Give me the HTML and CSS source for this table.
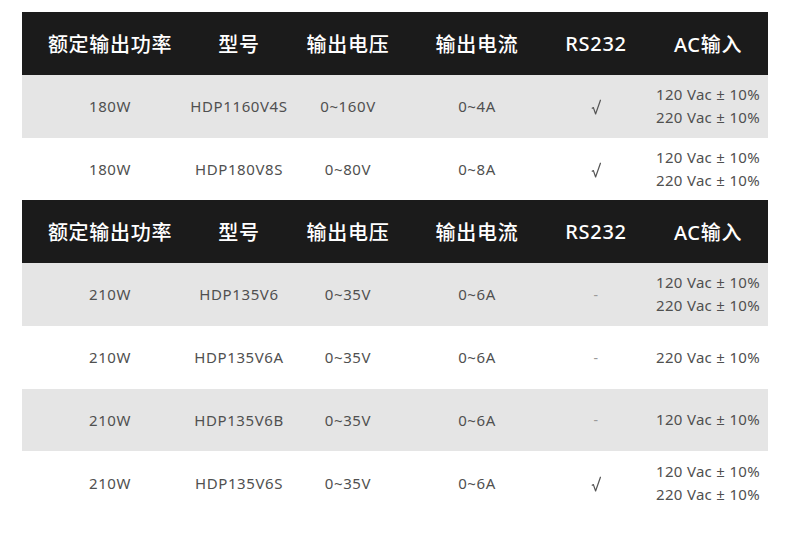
FILE: index.html
```html
<!DOCTYPE html>
<html lang="zh">
<head>
<meta charset="utf-8">
<link rel="stylesheet" href="styles.css">
</head>
<body>
<div class="table">
  <div class="row head">
    <div>额定输出功率</div><div>型号</div><div>输出电压</div><div>输出电流</div><div class="latin">RS232</div><div class="latin">AC输入</div>
  </div>
  <div class="row gray">
    <div>180W</div><div>HDP1160V4S</div><div>0~160V</div><div>0~4A</div><div class="mark"><svg width="10" height="16" viewBox="0 0 10 16"><path d="M0.8 9.6 L2.4 8.6 L4.6 15 L9.6 0.8" fill="none" stroke="#555" stroke-width="1.2" stroke-linejoin="round"/></svg></div><div class="ac">120 Vac ± 10%<br>220 Vac ± 10%</div>
  </div>
  <div class="row">
    <div>180W</div><div>HDP180V8S</div><div>0~80V</div><div>0~8A</div><div class="mark"><svg width="10" height="16" viewBox="0 0 10 16"><path d="M0.8 9.6 L2.4 8.6 L4.6 15 L9.6 0.8" fill="none" stroke="#555" stroke-width="1.2" stroke-linejoin="round"/></svg></div><div class="ac">120 Vac ± 10%<br>220 Vac ± 10%</div>
  </div>
  <div class="row head">
    <div>额定输出功率</div><div>型号</div><div>输出电压</div><div>输出电流</div><div class="latin">RS232</div><div class="latin">AC输入</div>
  </div>
  <div class="row gray">
    <div>210W</div><div>HDP135V6</div><div>0~35V</div><div>0~6A</div><div class="dash">-</div><div class="ac">120 Vac ± 10%<br>220 Vac ± 10%</div>
  </div>
  <div class="row">
    <div>210W</div><div>HDP135V6A</div><div>0~35V</div><div>0~6A</div><div class="dash">-</div><div class="ac">220 Vac ± 10%</div>
  </div>
  <div class="row gray">
    <div>210W</div><div>HDP135V6B</div><div>0~35V</div><div>0~6A</div><div class="dash">-</div><div class="ac">120 Vac ± 10%</div>
  </div>
  <div class="row">
    <div>210W</div><div>HDP135V6S</div><div>0~35V</div><div>0~6A</div><div class="mark"><svg width="10" height="16" viewBox="0 0 10 16"><path d="M0.8 9.6 L2.4 8.6 L4.6 15 L9.6 0.8" fill="none" stroke="#555" stroke-width="1.2" stroke-linejoin="round"/></svg></div><div class="ac">120 Vac ± 10%<br>220 Vac ± 10%</div>
  </div>
</div>
</body>
</html>
```
FILE: styles.css
```css
html, body {
  margin: 0;
  padding: 0;
  background: #ffffff;
}
body {
  font-family: "Noto Sans", "Noto Sans CJK SC", sans-serif;
  color: #505050;
}
.table {
  width: 746px;
  margin: 12px 0 0 22px;
}
.row {
  display: grid;
  grid-template-columns: 176px 82px 136px 122px 116px 108px;
  height: 62.75px;
  align-items: center;
  justify-items: center;
  font-size: 15px;
  letter-spacing: 0.6px;
  background: #ffffff;
}
.row > div {
  text-align: center;
  white-space: nowrap;
}
.row.gray {
  background: #e5e5e5;
}
.row.head {
  background: #1b1b1b;
  color: #ffffff;
  font-size: 20px;
  letter-spacing: 0.7px;
  font-family: "Noto Sans CJK SC", "Noto Sans", sans-serif;
  font-weight: 500;
}
.row.head > .latin {
  font-family: "Noto Sans", "Noto Sans CJK SC", sans-serif;
}
.ac {
  line-height: 23px;
  letter-spacing: 0.3px;
}
.mark {
  display: flex;
  padding-top: 2px;
}
.dash {
  color: #9a9a9a;
  font-size: 14px;
}
```
